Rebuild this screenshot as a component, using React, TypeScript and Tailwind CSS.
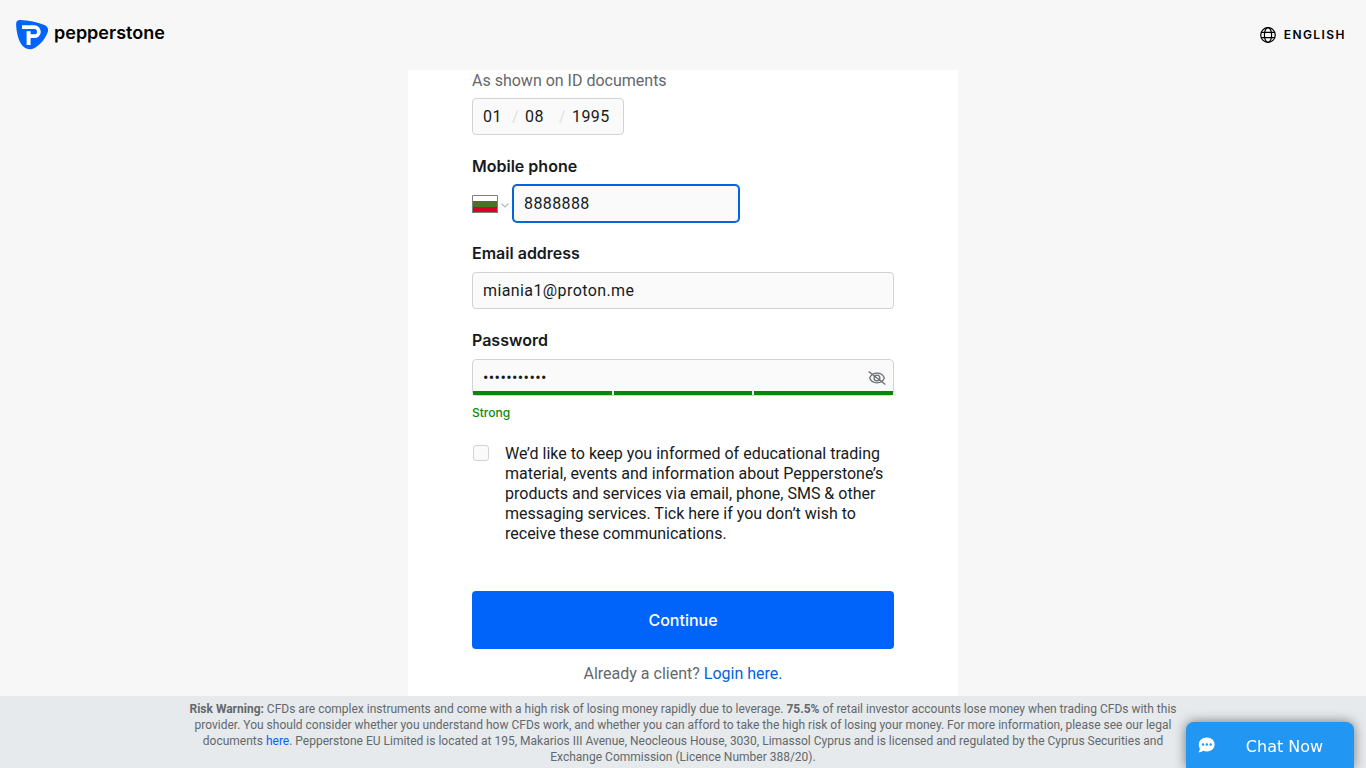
import React, { useState } from "react";

const labelClass =
  "block font-['Inter',sans-serif] text-base leading-5 font-semibold text-[#161a1d]";
const inputClass =
  "h-[37px] rounded border border-[#d1d3d4] bg-[#fafafa] px-2.5 text-base tracking-wide text-[#161a1d] outline-none";

const Logo = () => (
  <a href="#" className="flex items-center gap-1.5" aria-label="pepperstone">
    <svg width="32" height="30" viewBox="0 0 32 30" aria-hidden="true">
      <path
        d="M0.1 4.4C0 1.4 1.6 0 4.4 0.1C12.4 0.5 21 2 28.4 5C31.8 6.5 32.8 9.4 31.5 12.8C29 19 24.4 24.6 18.6 28C15.6 29.6 11.6 29.6 8.8 27.8C2.8 23.6 0.6 13.6 0.1 4.4Z"
        fill="#0064fa"
      />
      <path
        d="M6 7.2H18.4A4.5 4.5 0 0 1 18.4 16.2H12.6"
        fill="none"
        stroke="#fff"
        strokeWidth="3.8"
      />
      <path d="M10.6 11.2H14.6V25H10.6Z" fill="#fff" />
    </svg>
    <span className="pb-1 font-['Inter',sans-serif] text-lg leading-6 font-semibold text-black">
      pepperstone
    </span>
  </a>
);

const GlobeIcon = () => (
  <svg width="16" height="16" viewBox="0 0 16 16" fill="none" stroke="#000" strokeWidth="1.2" aria-hidden="true">
    <circle cx="8" cy="8" r="7.3" />
    <ellipse cx="8" cy="8" rx="3.6" ry="7.3" />
    <path d="M1.2 5.4H14.8M1.2 10.6H14.8" />
  </svg>
);

const EyeOffIcon = () => (
  <svg width="18" height="14" viewBox="0 0 18 14" fill="none" stroke="#6b6f73" strokeWidth="1.3" aria-hidden="true">
    <path d="M1.6 7C3 3.8 5.6 2.2 9 2.2S15 3.8 16.4 7C15 10.2 12.4 11.8 9 11.8S3 10.2 1.6 7Z" />
    <circle cx="9" cy="7" r="2.9" />
    <path d="M0.6 0.6L17.4 13.4" />
  </svg>
);

const ChatIcon = () => (
  <svg width="17" height="16" viewBox="0 0 17 16" aria-hidden="true">
    <path
      d="M8.8 0.5C13.3 0.5 16.6 3.5 16.6 7.5S13.3 14.5 8.8 14.5C7.5 14.5 6.2 14.3 5.1 13.7C3.7 14.8 2.1 15.3 0.3 15.3C1.2 14.2 1.8 13 1.9 11.7C1.2 10.5 0.8 9.1 0.8 7.5C0.8 3.5 4.3 0.5 8.8 0.5Z"
      fill="#fff"
    />
    <g fill="#2196f3">
      <circle cx="5" cy="7.5" r="1.2" />
      <circle cx="8.8" cy="7.5" r="1.2" />
      <circle cx="12.6" cy="7.5" r="1.2" />
    </g>
  </svg>
);

const App = () => {
  const [showPassword, setShowPassword] = useState(false);

  return (
    <div className="flex min-h-screen flex-col bg-[#f7f7f7] font-['Roboto',sans-serif]">
      <header className="flex h-[70px] items-center justify-between pr-5 pl-4">
        <Logo />
        <button className="flex items-center gap-2 font-['Inter',sans-serif] text-xs font-semibold tracking-[0.12em] text-black">
          <GlobeIcon />
          ENGLISH
        </button>
      </header>

      <main className="flex grow justify-center">
        <form className="w-full max-w-[550px] bg-white px-16 pt-px pb-3" onSubmit={(e) => e.preventDefault()}>
          <p className="text-base leading-5 text-[#64686b]">As shown on ID documents</p>
          <div className="mt-[7px] flex h-[37px] w-[152px] items-center rounded border border-[#d1d3d4] bg-[#fafafa] pl-2.5 text-base tracking-wide text-[#161a1d]">
            <input aria-label="Day" defaultValue="01" className="w-[25px] outline-none" />
            <span className="w-[17px] pl-1 text-[#dfe1e2]">/</span>
            <input aria-label="Month" defaultValue="08" className="w-[30px] outline-none" />
            <span className="w-[17px] pl-1 text-[#dfe1e2]">/</span>
            <input aria-label="Year" defaultValue="1995" className="w-[42px] outline-none" />
          </div>

          <label htmlFor="phone" className={`${labelClass} mt-[21px]`}>
            Mobile phone
          </label>
          <div className="mt-[9px] flex items-center">
            <div className="relative flex w-[41px] items-center gap-[3px]">
              <svg width="26" height="18" viewBox="0 0 26 18" aria-hidden="true">
                <path d="M0 0H26V6H0Z" fill="#fff" />
                <path d="M0 6H26V12H0Z" fill="#4b7128" />
                <path d="M0 12H26V18H0Z" fill="#d80027" />
                <path d="M0.5 0.5H25.5V17.5H0.5Z" fill="none" stroke="#808080" />
              </svg>
              <svg width="8" height="9" viewBox="0 0 8 9" fill="none" stroke="#b4b6b8" strokeWidth="1.2" aria-hidden="true">
                <path d="M0.5 4.5L4 8L7.5 4.5" />
              </svg>
              <select aria-label="Country code" className="absolute inset-0 opacity-0">
                <option>Bulgaria</option>
              </select>
            </div>
            <input
              id="phone"
              type="tel"
              defaultValue="8888888"
              className="h-[37px] w-[226px] rounded-sm border border-[#0064e0] bg-[#fafafa] px-2.5 text-base tracking-wide text-[#161a1d] ring-1 ring-[#0064e0] outline-none"
            />
          </div>

          <label htmlFor="email" className={`${labelClass} mt-[21px]`}>
            Email address
          </label>
          <input
            id="email"
            type="email"
            defaultValue="miania1@proton.me"
            className={`${inputClass} mt-[9px] block w-full`}
          />

          <label htmlFor="password" className={`${labelClass} mt-[21px]`}>
            Password
          </label>
          <div className="relative mt-[9px] overflow-hidden rounded">
            <input
              id="password"
              type={showPassword ? "text" : "password"}
              defaultValue="Trading2023"
              className={`${inputClass} block w-full pr-10`}
            />
            <button
              type="button"
              aria-label="Show password"
              className="absolute top-3 right-2"
              onClick={() => setShowPassword(!showPassword)}
            >
              <EyeOffIcon />
            </button>
            <div className="absolute inset-x-px bottom-px grid grid-cols-3 gap-0.5">
              <span className="h-1 bg-[#0b840b]" />
              <span className="h-1 bg-[#0b840b]" />
              <span className="h-1 bg-[#0b840b]" />
            </div>
          </div>
          <p className="mt-[9px] font-['Inter',sans-serif] text-xs leading-4 font-medium text-[#0b8a0b]">Strong</p>

          <div className="mt-[23px] flex gap-4">
            <input
              id="marketing"
              type="checkbox"
              className="mt-px ml-px size-4 shrink-0 appearance-none rounded-[3px] border border-[#d1d3d4] bg-[#fafafa] checked:bg-[#0064fa]"
            />
            <label htmlFor="marketing" className="text-base leading-5 text-[#161a1d]">
              We’d like to keep you informed of educational trading material, events and information about
              Pepperstone’s products and services via email, phone, SMS &amp; other messaging services. Tick
              here if you don’t wish to receive these communications.
            </label>
          </div>

          <button
            type="submit"
            className="mt-[47px] h-[58px] w-full rounded bg-[#0064fa] font-['Inter',sans-serif] text-base font-medium text-white"
          >
            Continue
          </button>
          <p className="mt-[15px] text-center text-base leading-5 text-[#64686b]">
            Already a client?{" "}
            <a href="#" className="text-[#0064e0]">
              Login here.
            </a>
          </p>
        </form>
      </main>

      <footer className="bg-[#e6eaed] px-4 pt-[5px] pb-[3px] text-center text-xs leading-4 text-[#64686b]">
        <p className="mx-auto max-w-[1000px]">
          <strong>Risk Warning:</strong> CFDs are complex instruments and come with a high risk of losing money
          rapidly due to leverage. <strong>75.5%</strong> of retail investor accounts lose money when trading
          CFDs with this provider. You should consider whether you understand how CFDs work, and whether you can
          afford to take the high risk of losing your money. For more information, please see our legal
          documents{" "}
          <a href="#" className="text-[#0064fa]">
            here
          </a>
          . Pepperstone EU Limited is located at 195, Makarios III Avenue, Neocleous House, 3030, Limassol
          Cyprus and is licensed and regulated by the Cyprus Securities and Exchange Commission (Licence Number
          388/20).
        </p>
      </footer>

      <button className="fixed right-3 bottom-0 flex h-[46px] w-[168px] items-center rounded-t-lg bg-[#2196f3] pl-3 font-['DejaVu_Sans',sans-serif] text-base text-white shadow-[0_0_12px_rgba(0,0,0,0.5)]">
        <ChatIcon />
        <span className="grow pt-1 text-center">Chat Now</span>
      </button>
    </div>
  );
};

export default App;
